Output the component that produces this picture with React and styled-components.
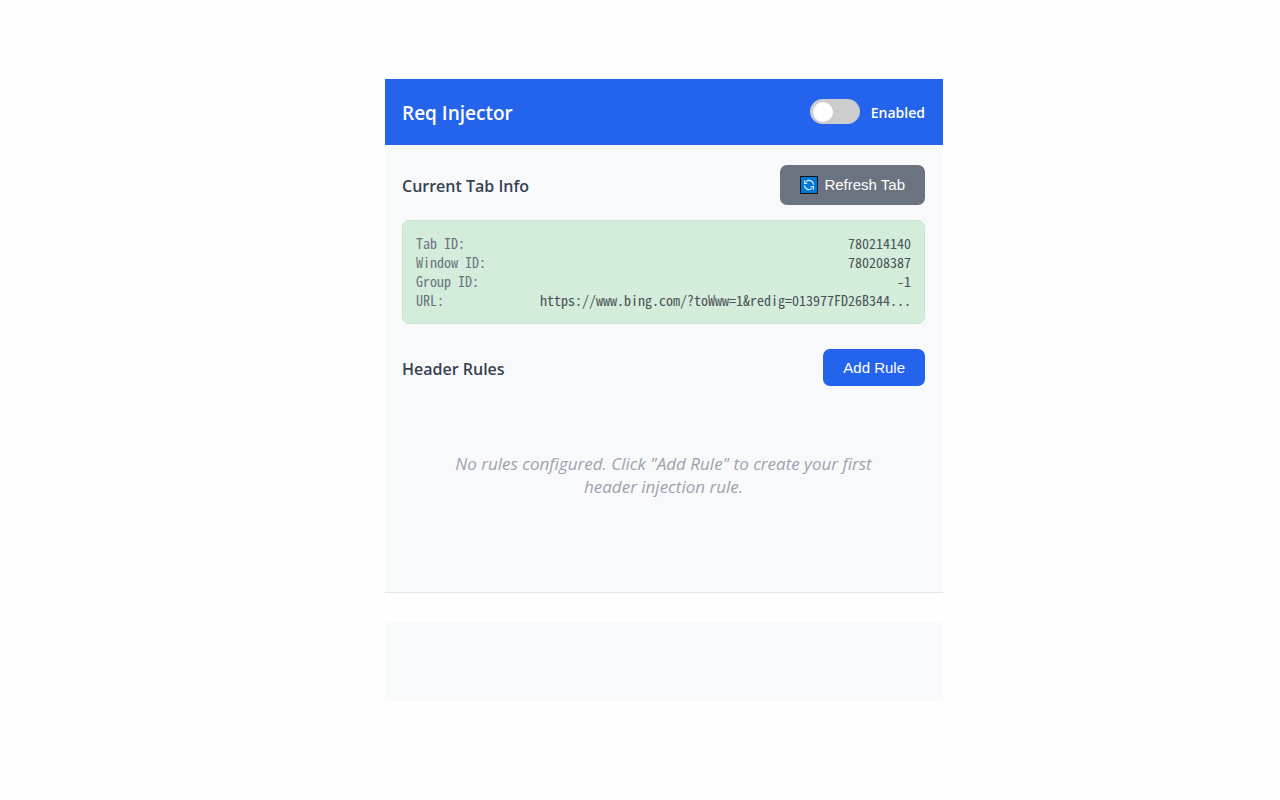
import React, { useState } from "react";
import styled, { createGlobalStyle } from "styled-components";

const GlobalStyle = createGlobalStyle`
  *, *::before, *::after { box-sizing: border-box; }
  body {
    margin: 0;
    background: #fefefe;
    font-family: "Open Sans", "Noto Sans", sans-serif;
    color: #374151;
  }
`;

const Page = styled.div`
  display: flex;
  justify-content: center;
  padding: 79px 0 79px 48px;
`;

const Popup = styled.div`
  width: 100%;
  max-width: 558px;
`;

const Header = styled.header`
  display: flex;
  align-items: flex-start;
  justify-content: space-between;
  padding: 20px 18px 18px 17px;
  background: #2463eb;
  color: #fff;
`;

const Title = styled.h1`
  margin: 0;
  font-size: 19px;
  line-height: 28px;
  font-weight: 600;
`;

const SwitchLabel = styled.label`
  display: flex;
  align-items: flex-start;
  gap: 11px;
  font-size: 14px;
  line-height: 28px;
  font-weight: 600;
  cursor: pointer;
`;

const Switch = styled.input`
  appearance: none;
  display: flex;
  align-items: center;
  width: 50px;
  height: 25px;
  margin: 0;
  padding: 0 3px;
  border-radius: 25px;
  background: #ccc;
  cursor: pointer;

  &::before {
    content: "";
    width: 20px;
    height: 20px;
    border-radius: 50%;
    background: #fff;
  }
  &:checked {
    justify-content: flex-end;
    background: #10b981;
  }
`;

const Main = styled.main`
  min-height: 448px;
  padding: 20px 18px 0 17px;
  background: #f8f9fb;
  border-bottom: 1px solid #e2e5ea;
`;

const SectionHead = styled.div`
  display: flex;
  align-items: center;
  justify-content: space-between;
`;

const SectionTitle = styled.h2`
  margin: 0;
  padding-top: 2px;
  font-size: 16px;
  line-height: 24px;
  font-weight: 600;
`;

const Button = styled.button`
  display: flex;
  align-items: center;
  gap: 6px;
  height: ${(p) => (p.$secondary ? 40 : 37)}px;
  padding: 0 20px;
  border: 0;
  border-radius: 7px;
  background: ${(p) => (p.$secondary ? "#6b7280" : "#2463eb")};
  color: #fff;
  font-family: "Liberation Sans", Arial, sans-serif;
  font-size: 15px;
  line-height: 18px;
  cursor: pointer;
`;

const InfoList = styled.dl`
  margin: 15px 0 25px;
  padding: 13px;
  border: 1px solid #c3e6cb;
  border-radius: 7px;
  background: #d4edda;
  font-family: "Noto Sans Mono CJK SC", "Liberation Mono", monospace;
  font-size: 14px;
  line-height: 19px;
`;

const InfoRow = styled.div`
  display: flex;
  justify-content: space-between;
`;

const InfoKey = styled.dt`
  color: #6b7280;
`;

const InfoValue = styled.dd`
  margin: 0;
  color: #495057;
`;

const Empty = styled.p`
  margin: 0;
  padding: 66px 40px;
  color: #9ca3af;
  font-size: 17px;
  line-height: 23px;
  font-style: italic;
  text-align: center;
`;

const Footer = styled.footer`
  height: 78px;
  margin-top: 30px;
  background: #f8f9fb;
`;

const RefreshIcon = () => (
  <svg width="18" height="18" viewBox="0 0 18 18" aria-hidden="true">
    <rect x="0.5" y="0.5" width="17" height="17" fill="#0078d7" stroke="#101418" />
    <g fill="none" stroke="#d9eeff" strokeWidth="1.2">
      <path d="M6.2 5.4A4.6 4.6 0 0 1 13.6 8.8" />
      <path d="M11.8 12.6A4.6 4.6 0 0 1 4.4 9.2" />
      <path d="M4.6 4.6V7.4H7.2M13.4 13.4V10.6H10.8" />
    </g>
  </svg>
);

const tabInfo = [
  ["Tab ID:", "780214140"],
  ["Window ID:", "780208387"],
  ["Group ID:", "-1"],
  ["URL:", "https://www.bing.com/?toWww=1&redig=013977FD26B344..."],
];

export default function App() {
  const [enabled, setEnabled] = useState(false);
  return (
    <>
      <GlobalStyle />
      <Page>
        <Popup>
          <Header>
            <Title>Req Injector</Title>
            <SwitchLabel htmlFor="enabled">
              <Switch
                id="enabled"
                type="checkbox"
                checked={enabled}
                onChange={(e) => setEnabled(e.target.checked)}
              />
              Enabled
            </SwitchLabel>
          </Header>
          <Main>
            <SectionHead>
              <SectionTitle>Current Tab Info</SectionTitle>
              <Button type="button" $secondary>
                <RefreshIcon />
                Refresh Tab
              </Button>
            </SectionHead>
            <InfoList>
              {tabInfo.map(([key, value]) => (
                <InfoRow key={key}>
                  <InfoKey>{key}</InfoKey>
                  <InfoValue>{value}</InfoValue>
                </InfoRow>
              ))}
            </InfoList>
            <SectionHead>
              <SectionTitle>Header Rules</SectionTitle>
              <Button type="button">Add Rule</Button>
            </SectionHead>
            <Empty>
              No rules configured. Click "Add Rule" to create your first header
              injection rule.
            </Empty>
          </Main>
          <Footer />
        </Popup>
      </Page>
    </>
  );
}
